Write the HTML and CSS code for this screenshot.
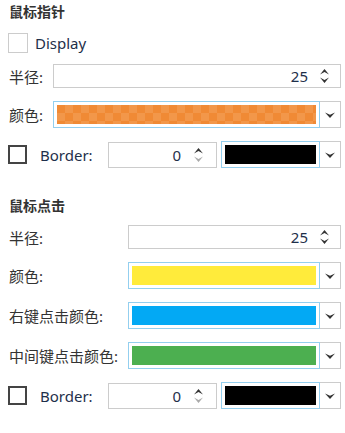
FILE: index.html
```html
<!DOCTYPE html>
<html lang="zh">
  <head>
    <meta charset="UTF-8" />
    <title>鼠标设置</title>
    <link rel="stylesheet" href="styles.css">
  </head>
  <body>
    <section class="group">
      <h3 class="group-title">鼠标指针</h3>
      <div class="form">
        <label class="check-row">
          <span class="check light"></span>
          <span class="latin">Display</span>
        </label>
        <span class="label">半径:</span>
        <div class="spin">
          <span class="value">25</span>
          <span class="arrows">
            <svg width="9" height="6" viewBox="0 0 9 6"><path d="M0 5.5 L4.5 0 L9 5.5 L4.5 3 Z" /></svg>
            <svg width="9" height="6" viewBox="0 0 9 6"><path d="M0 0.5 L4.5 3 L9 0.5 L4.5 6 Z" /></svg>
          </span>
        </div>
        <span class="label">颜色:</span>
        <div class="picker">
          <div class="swatch-box"><div class="swatch orange"></div></div>
          <div class="drop"><svg width="10" height="6" viewBox="0 0 10 6"><path d="M0 0.5 L5 2.8 L10 0.5 L5 6 Z" /></svg></div>
        </div>
      </div>
      <div class="border-row">
        <span class="check dark"></span>
        <span class="latin border-label">Border:</span>
        <div class="spin small">
          <span class="value">0</span>
          <span class="arrows">
            <svg width="9" height="6" viewBox="0 0 9 6"><path d="M0 5.5 L4.5 0 L9 5.5 L4.5 3 Z" /></svg>
            <svg width="9" height="6" viewBox="0 0 9 6" class="off"><path d="M0 0.5 L4.5 3 L9 0.5 L4.5 6 Z" /></svg>
          </span>
        </div>
        <div class="picker">
          <div class="swatch-box"><div class="swatch black"></div></div>
          <div class="drop"><svg width="10" height="6" viewBox="0 0 10 6"><path d="M0 0.5 L5 2.8 L10 0.5 L5 6 Z" /></svg></div>
        </div>
      </div>
    </section>

    <section class="group second">
      <h3 class="group-title">鼠标点击</h3>
      <div class="form">
        <span class="label">半径:</span>
        <div class="spin">
          <span class="value">25</span>
          <span class="arrows">
            <svg width="9" height="6" viewBox="0 0 9 6"><path d="M0 5.5 L4.5 0 L9 5.5 L4.5 3 Z" /></svg>
            <svg width="9" height="6" viewBox="0 0 9 6"><path d="M0 0.5 L4.5 3 L9 0.5 L4.5 6 Z" /></svg>
          </span>
        </div>
        <span class="label">颜色:</span>
        <div class="picker">
          <div class="swatch-box"><div class="swatch yellow"></div></div>
          <div class="drop"><svg width="10" height="6" viewBox="0 0 10 6"><path d="M0 0.5 L5 2.8 L10 0.5 L5 6 Z" /></svg></div>
        </div>
        <span class="label">右键点击颜色:</span>
        <div class="picker">
          <div class="swatch-box"><div class="swatch blue"></div></div>
          <div class="drop"><svg width="10" height="6" viewBox="0 0 10 6"><path d="M0 0.5 L5 2.8 L10 0.5 L5 6 Z" /></svg></div>
        </div>
        <span class="label">中间键点击颜色:</span>
        <div class="picker">
          <div class="swatch-box"><div class="swatch green"></div></div>
          <div class="drop"><svg width="10" height="6" viewBox="0 0 10 6"><path d="M0 0.5 L5 2.8 L10 0.5 L5 6 Z" /></svg></div>
        </div>
      </div>
      <div class="border-row">
        <span class="check dark"></span>
        <span class="latin border-label">Border:</span>
        <div class="spin small">
          <span class="value">0</span>
          <span class="arrows">
            <svg width="9" height="6" viewBox="0 0 9 6"><path d="M0 5.5 L4.5 0 L9 5.5 L4.5 3 Z" /></svg>
            <svg width="9" height="6" viewBox="0 0 9 6" class="off"><path d="M0 0.5 L4.5 3 L9 0.5 L4.5 6 Z" /></svg>
          </span>
        </div>
        <div class="picker">
          <div class="swatch-box"><div class="swatch black"></div></div>
          <div class="drop"><svg width="10" height="6" viewBox="0 0 10 6"><path d="M0 0.5 L5 2.8 L10 0.5 L5 6 Z" /></svg></div>
        </div>
      </div>
    </section>
  </body>
</html>
```

FILE: styles.css
```css
body {
  margin: 0;
  padding: 2px 4px 0 8px;
  background: #fff;
  color: #333;
  font-family: "Noto Sans", "Noto Sans CJK SC", sans-serif;
  font-size: 15px;
}
.group-title {
  margin: 0 0 11px 1px;
  font-size: 14px;
  line-height: 20px;
  font-weight: bold;
  color: #333;
}
.second {
  margin-top: 28px;
}
.second .group-title {
  margin-bottom: 9px;
}
.form {
  display: grid;
  grid-template-columns: auto 1fr;
  column-gap: 10px;
  row-gap: 13px;
  align-items: center;
}
.label {
  padding-left: 1px;
  white-space: nowrap;
}
.latin {
  color: #1e2f4a;
}
.check-row {
  grid-column: 1 / 3;
  display: flex;
  align-items: center;
  height: 20px;
  margin-bottom: -2px;
}
.check {
  display: inline-block;
  box-sizing: border-box;
  background: #fff;
}
.check.light {
  width: 20px;
  height: 20px;
  border: 1px solid #ccc;
  margin-right: 7px;
}
.check.dark {
  width: 19px;
  height: 19px;
  border: 2px solid #444;
  flex: none;
}
.spin {
  display: flex;
  align-items: center;
  justify-content: flex-end;
  height: 24px;
  box-sizing: border-box;
  border: 1px solid #ccc;
  background: #fff;
  color: #1e2f4a;
}
.spin .value {
  line-height: 20px;
}
.arrows {
  display: flex;
  flex-direction: column;
  align-items: center;
  gap: 2px;
  width: 32px;
}
.arrows svg path {
  fill: #333;
}
.arrows svg.off path {
  fill: #aaa;
}
.picker {
  display: flex;
  height: 27px;
}
.swatch-box {
  flex: 1;
  box-sizing: border-box;
  border: 1px solid #93cfef;
  padding: 3px;
  background: #fff;
}
.swatch {
  height: 100%;
}
.orange {
  background-color: #f08a35;
  background-image: conic-gradient(#f2974a 25%, transparent 0 50%, #f2974a 0 75%, transparent 0);
  background-size: 16px 16px;
}
.yellow { background: #ffeb3b; }
.blue { background: #03a9f4; }
.green { background: #4caf50; }
.black { background: #000; }
.drop {
  width: 21px;
  box-sizing: border-box;
  border: 1px solid #ccc;
  border-left: none;
  display: flex;
  align-items: center;
  justify-content: center;
}
.drop svg path {
  fill: #333;
}
.border-row {
  display: flex;
  align-items: center;
  margin-top: 13px;
  height: 27px;
}
.border-label {
  width: 68px;
  margin-left: 13px;
}
.spin.small {
  width: 109px;
  height: 26px;
  margin-right: 4px;
}
.spin.small .arrows {
  width: 35px;
}
.border-row .picker {
  flex: 1;
}
```
